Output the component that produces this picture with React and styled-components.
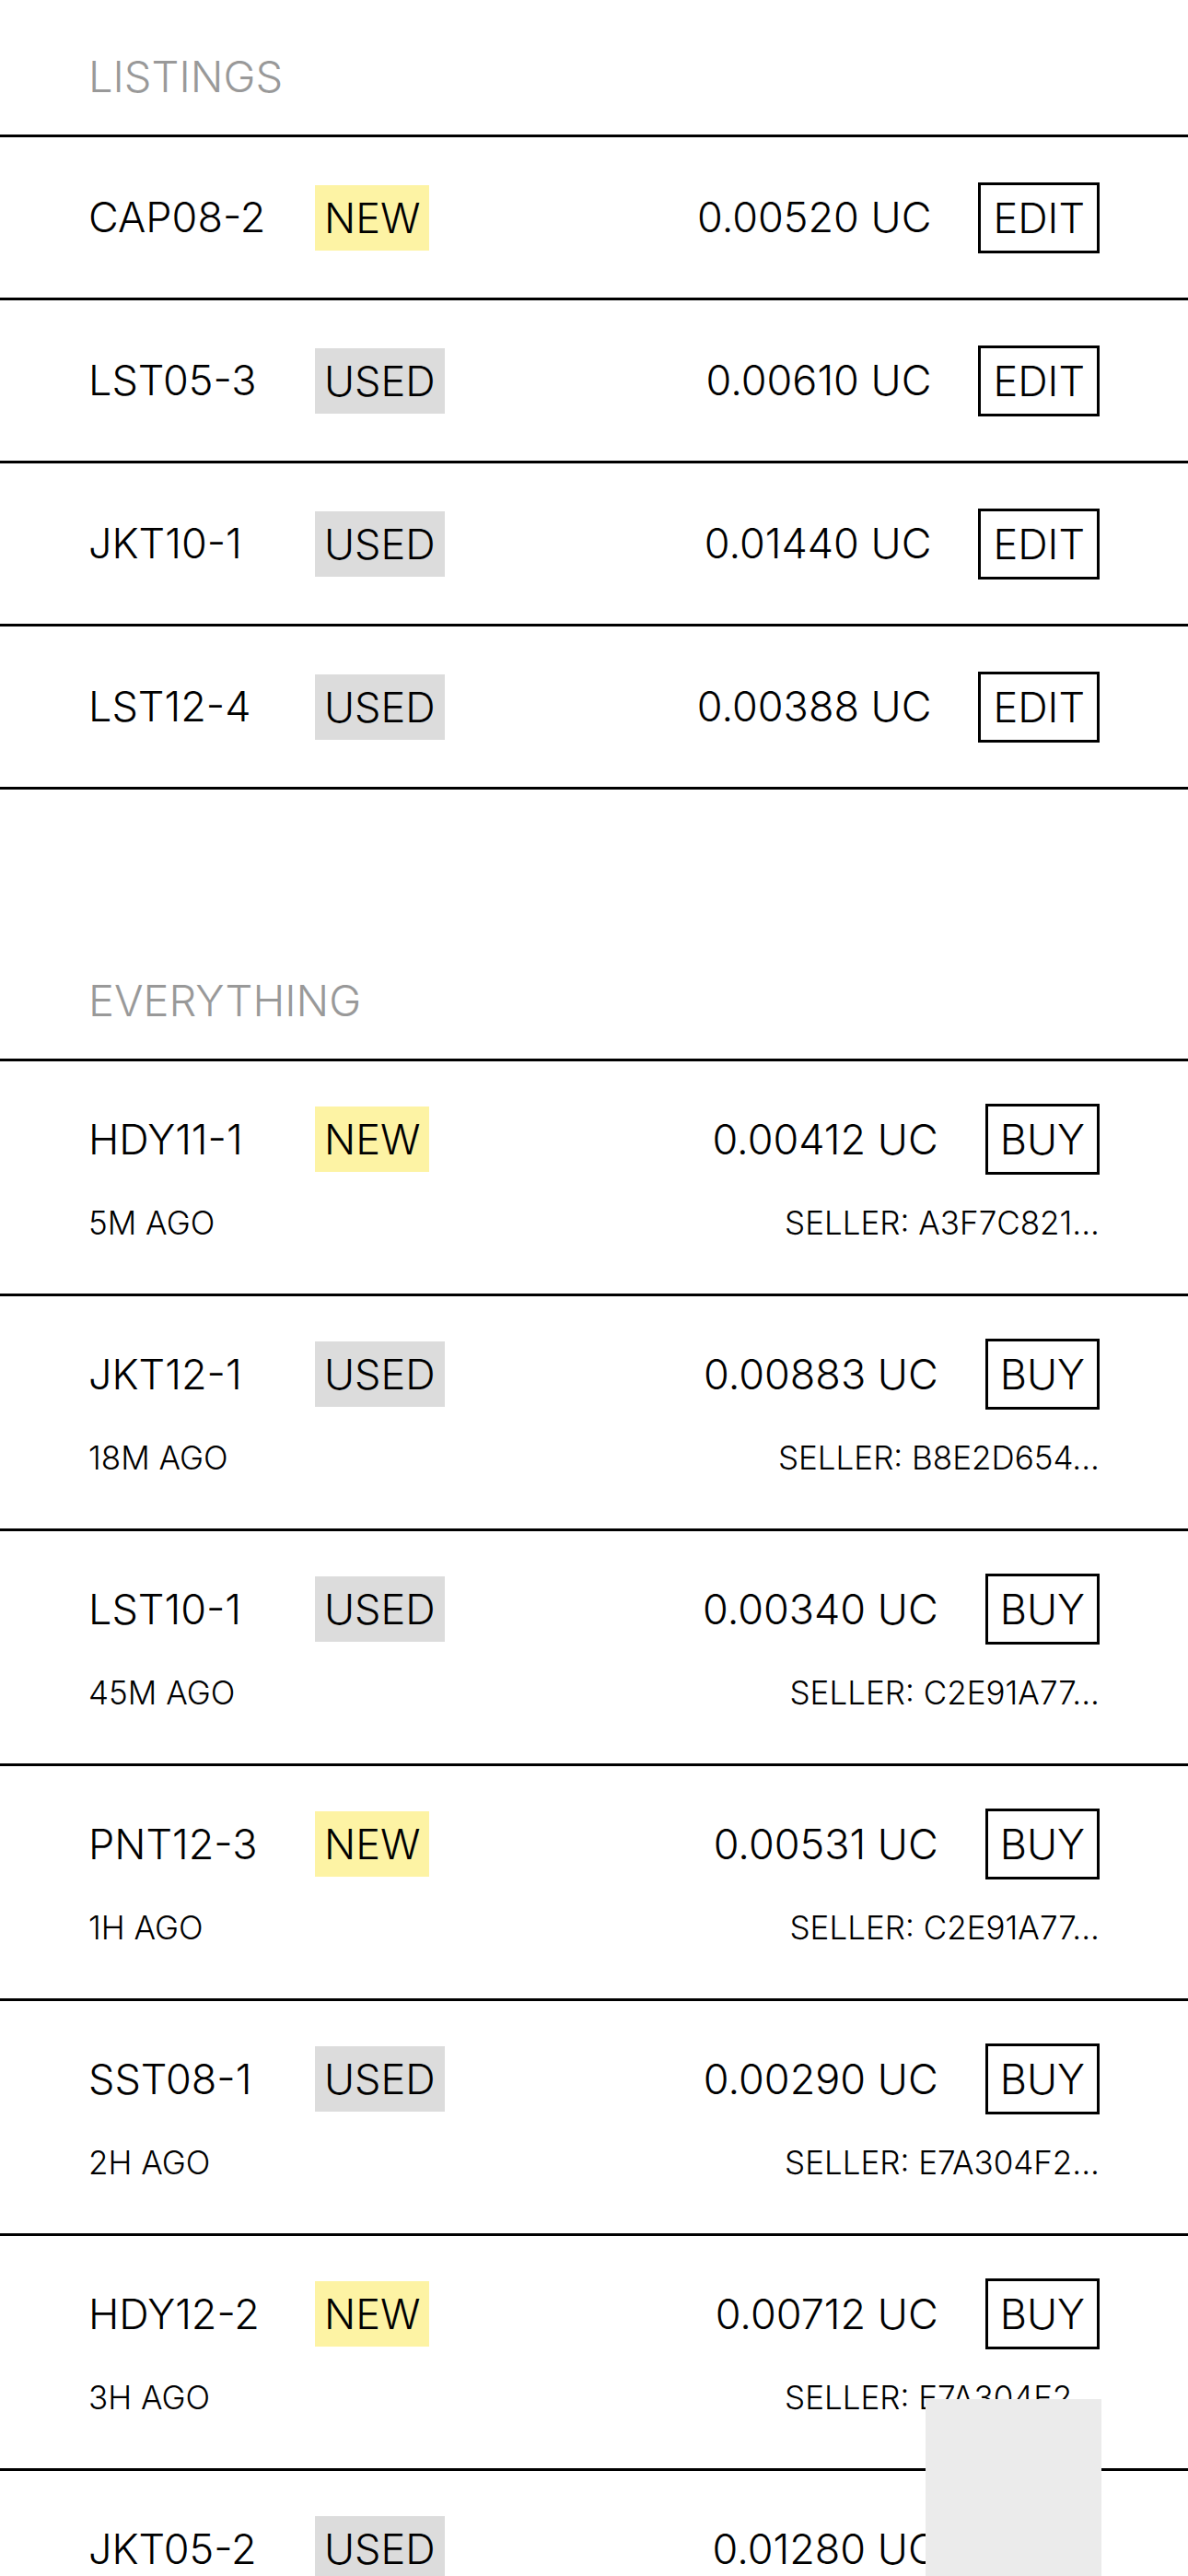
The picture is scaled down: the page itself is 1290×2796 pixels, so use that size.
import styled, { createGlobalStyle } from "styled-components";

const listings = [
  { id: "CAP08-2", condition: "NEW", price: "0.00520" },
  { id: "LST05-3", condition: "USED", price: "0.00610" },
  { id: "JKT10-1", condition: "USED", price: "0.01440" },
  { id: "LST12-4", condition: "USED", price: "0.00388" },
];

const everything = [
  { id: "HDY11-1", condition: "NEW", price: "0.00412", age: "5M AGO", seller: "A3F7C821" },
  { id: "JKT12-1", condition: "USED", price: "0.00883", age: "18M AGO", seller: "B8E2D654" },
  { id: "LST10-1", condition: "USED", price: "0.00340", age: "45M AGO", seller: "C2E91A77" },
  { id: "PNT12-3", condition: "NEW", price: "0.00531", age: "1H AGO", seller: "C2E91A77" },
  { id: "SST08-1", condition: "USED", price: "0.00290", age: "2H AGO", seller: "E7A304F2" },
  { id: "HDY12-2", condition: "NEW", price: "0.00712", age: "3H AGO", seller: "E7A304F2" },
  { id: "JKT05-2", condition: "USED", price: "0.01280", age: "5H AGO", seller: "F1B8C093" },
];

const GlobalStyle = createGlobalStyle`
  * { box-sizing: border-box; }
  body {
    margin: 0;
    background: #fff;
    color: #000;
    font-family: Inter, Roboto, "Liberation Sans", sans-serif;
    font-weight: 300;
  }
`;

const App = () => {
  return (
    <>
      <GlobalStyle />
      <Page>
        <Section>
          <Heading>LISTINGS</Heading>
          <List>
            {listings.map((item) => (
              <ListingRow key={item.id}>
                <Name>{item.id}</Name>
                <Badge condition={item.condition}>{item.condition}</Badge>
                <Price>{item.price} UC</Price>
                <ActionButton>EDIT</ActionButton>
              </ListingRow>
            ))}
          </List>
        </Section>
        <Section spaced>
          <Heading>EVERYTHING</Heading>
          <List>
            {everything.map((item) => (
              <MarketRow key={item.id}>
                <MainLine>
                  <Name>{item.id}</Name>
                  <Badge condition={item.condition}>{item.condition}</Badge>
                  <Price>{item.price} UC</Price>
                  <ActionButton>BUY</ActionButton>
                </MainLine>
                <SubLine>
                  <span>{item.age}</span>
                  <span>SELLER: {item.seller}...</span>
                </SubLine>
              </MarketRow>
            ))}
          </List>
        </Section>
      </Page>
      <FloatingPanel />
    </>
  );
};

const Page = styled.main`
  display: flex;
  flex-direction: column;
`;

const Section = styled.section`
  margin-top: ${(p) => (p.spaced ? "146px" : "0")};
`;

const Heading = styled.h2`
  margin: 0;
  padding: 55px 96px 35px;
  font-size: 47px;
  line-height: 56px;
  font-weight: 300;
  color: #999;
`;

const List = styled.div`
  border-top: 3px solid #000;
`;

const ListingRow = styled.div`
  display: flex;
  align-items: center;
  height: 177px;
  padding: 0 96px;
  border-bottom: 3px solid #000;
  font-size: 45px;
`;

const MarketRow = styled.div`
  display: flex;
  flex-direction: column;
  height: 255px;
  padding: 46px 96px 0;
  border-bottom: 3px solid #000;
`;

const MainLine = styled.div`
  display: flex;
  align-items: center;
  height: 77px;
  font-size: 45px;
`;

const SubLine = styled.div`
  display: flex;
  justify-content: space-between;
  margin-top: 32px;
  font-size: 35px;
  line-height: 40px;
`;

const Name = styled.span`
  width: 246px;
  flex-shrink: 0;
  line-height: 56px;
`;

const Badge = styled.span`
  padding: 0 10px;
  line-height: 71px;
  background: ${(p) => (p.condition === "NEW" ? "#fdf3a4" : "#dcdcdc")};
`;

const Price = styled.span`
  margin-left: auto;
  margin-right: 51px;
  line-height: 56px;
`;

const ActionButton = styled.button`
  padding: 0 13px;
  height: 77px;
  border: 3px solid #000;
  background: #fff;
  color: #000;
  font-family: inherit;
  font-weight: 300;
  font-size: 45px;
  line-height: 71px;
  cursor: pointer;
`;

const FloatingPanel = styled.div`
  position: fixed;
  right: 94px;
  bottom: 0;
  width: 191px;
  height: 192px;
  background: #ebebeb;
`;

export default App;
